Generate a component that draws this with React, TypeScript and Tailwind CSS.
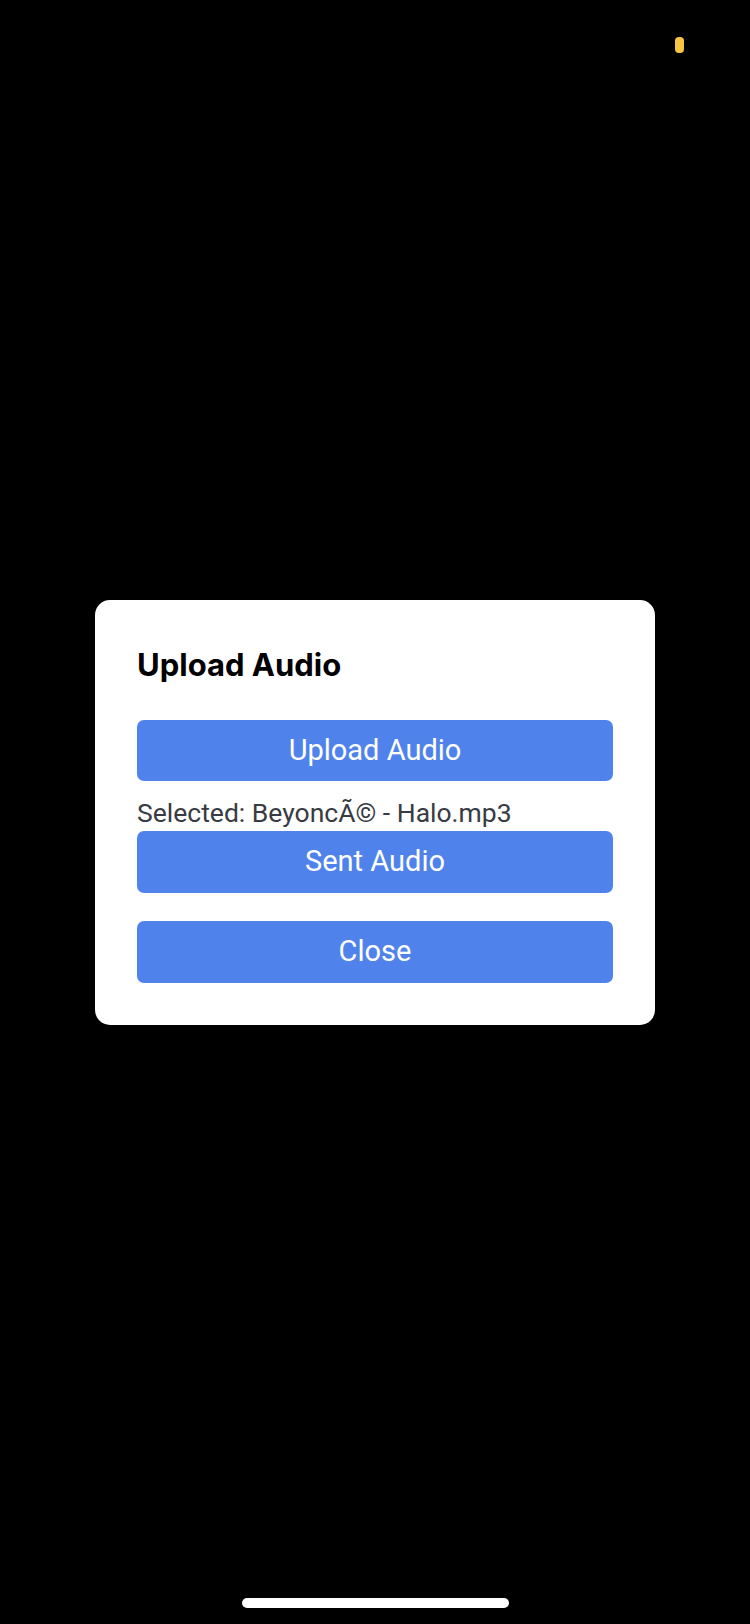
import React from "react";

export default function App() {
  const body = { fontFamily: "Roboto, 'Liberation Sans', sans-serif" };
  const title = { fontFamily: "Inter, 'Noto Sans', 'Liberation Sans', sans-serif" };
  return (
    <div className="relative w-[750px] h-[1624px] bg-black flex items-center justify-center overflow-hidden" style={body}>
      <div className="absolute left-[675px] top-[37px] w-[9px] h-[16px] rounded-[4px] bg-[#f6c643]" />
      <div className="w-[560px] bg-white rounded-[15px] px-[42px] pt-[47px] pb-[42px] flex flex-col">
        <h2 className="text-[31px] leading-[36px] font-bold text-black" style={title}>Upload Audio</h2>
        <button className="mt-[37px] h-[61px] w-full rounded-[7px] bg-[#4f83eb] text-white text-[29px] leading-none flex items-center justify-center">
          Upload Audio
        </button>
        <p className="mt-[16px] text-[26.5px] leading-[32px] text-[#383b42]">Selected: BeyoncÃ© - Halo.mp3</p>
        <button className="mt-[2px] h-[62px] w-full rounded-[7px] bg-[#4f83eb] text-white text-[29px] leading-none flex items-center justify-center">
          Sent Audio
        </button>
        <button className="mt-[28px] h-[62px] w-full rounded-[7px] bg-[#4f83eb] text-white text-[29px] leading-none flex items-center justify-center">
          Close
        </button>
      </div>
      <div className="absolute left-[242px] top-[1598px] w-[267px] h-[10px] rounded-full bg-white" />
    </div>
  );
}
